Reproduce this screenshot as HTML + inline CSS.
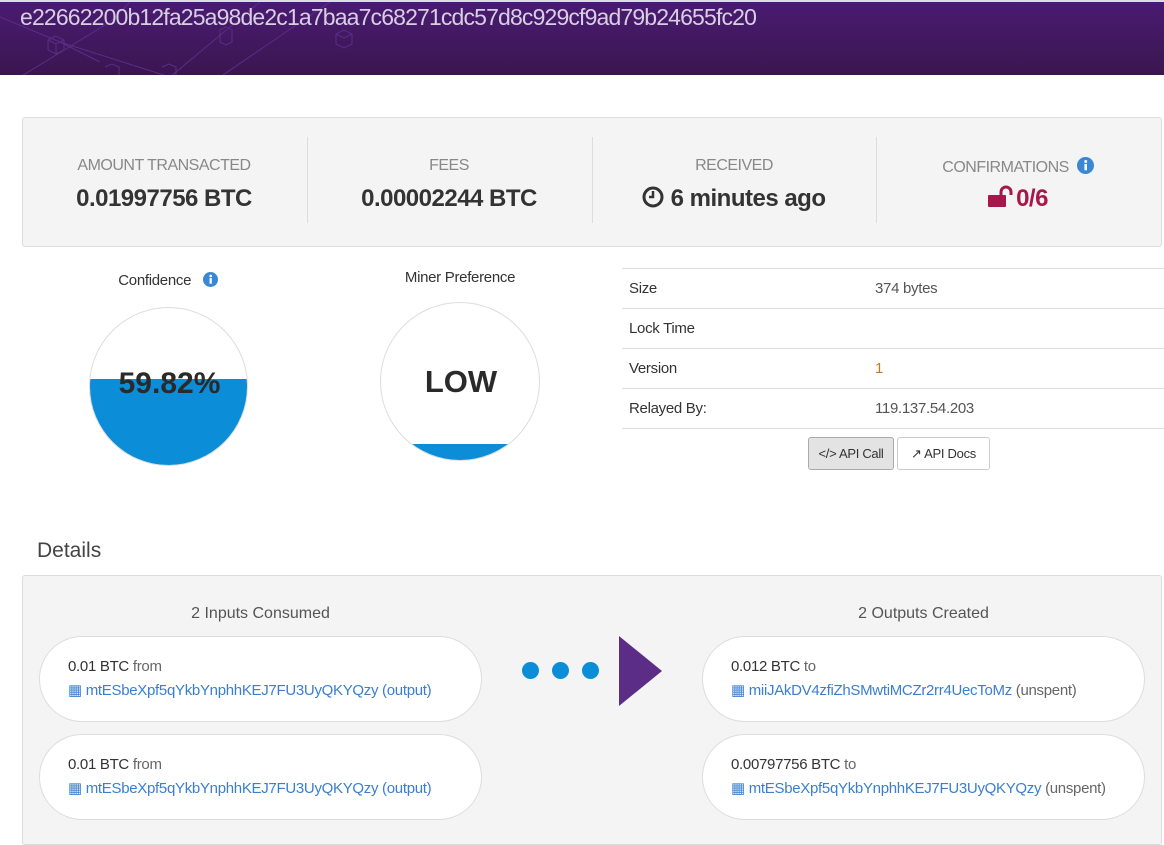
<!DOCTYPE html>
<html><head><meta charset="utf-8"><style>
*{margin:0;padding:0;box-sizing:border-box}
body{width:1164px;height:835px;overflow:hidden;background:#fff;font-family:"Liberation Sans",sans-serif;color:#333;position:relative}
.a{position:absolute}
.hdr{left:0;top:0;width:1164px;height:75px;background:linear-gradient(180deg,#4a1b72,#3a1650);border-top:2px solid #ddd;overflow:hidden}
.hash{left:20px;top:2px;font-size:23px;color:#d8cfe2;letter-spacing:-0.85px}
.stats{left:22px;top:117px;width:1140px;height:130px;background:#f4f4f4;border:1px solid #ddd;border-radius:3px}
.div{top:137px;width:1px;height:86px;background:#ddd}
.lbl{top:157px;width:284px;text-align:center;font-size:16px;color:#888;letter-spacing:-0.5px}
.val{top:185px;width:284px;text-align:center;font-size:24px;font-weight:bold;color:#333;letter-spacing:-0.5px}
.circ{border-radius:50%;border:1px solid #ddd;overflow:hidden;background:#fff}
.row{left:622px;width:542px;height:40px;border-top:1px solid #ddd;font-size:15px;letter-spacing:-0.3px}
.row span{position:absolute;top:11px}
.btn{top:437px;height:33px;border:1px solid #ccc;border-radius:3px;font-size:13px;text-align:center;line-height:31px;color:#333;letter-spacing:-0.3px}
.det{left:22px;top:575px;width:1140px;height:270px;background:#f4f4f4;border:1px solid #ddd;border-radius:3px}
.pill{width:443px;height:86px;background:#fff;border:1px solid #ddd;border-radius:43px;font-size:15px;letter-spacing:-0.3px}
.pill .l1{position:absolute;left:28px;top:21px}
.pill .l2{position:absolute;left:28px;top:44px;color:#3a7fcf}
.pill .g{color:#666}
.dot{width:17px;height:17px;border-radius:50%;background:#0b8dd8;top:662px}
</style></head><body>
<div class="a hdr">
<svg width="800" height="73" style="position:absolute;left:0;top:0" stroke="#5a2d86" fill="none" stroke-width="1">
<path d="M0 15 L60 40 L100 60 M20 75 L110 20 L130 0 M60 40 L170 75 M170 75 L260 0 M330 0 L220 75"/>
<path d="M48 38 l8 -4 l8 4 v10 l-8 4 l-8 -4z M48 38 l8 4 l8 -4 M56 42 v10"/>
<path d="M336 32 l8 -4 l8 4 v10 l-8 4 l-8 -4z M336 32 l8 4 l8 -4"/>
<path d="M220 28 l6 -3 l6 3 v12 l-6 3 l-6 -3z"/>
<path d="M105 65 l7 -3 l7 3 v10 M162 65 l7 -3 l7 3 v10"/>
</svg>
<div class="a hash">e22662200b12fa25a98de2c1a7baa7c68271cdc57d8c929cf9ad79b24655fc20</div>
</div>

<div class="a stats"></div>
<div class="a div" style="left:307px"></div>
<div class="a div" style="left:592px"></div>
<div class="a div" style="left:876px"></div>
<div class="a lbl" style="left:22px">AMOUNT TRANSACTED</div>
<div class="a val" style="left:22px">0.01997756 BTC</div>
<div class="a lbl" style="left:307px">FEES</div>
<div class="a val" style="left:307px">0.00002244 BTC</div>
<div class="a lbl" style="left:592px">RECEIVED</div>
<div class="a val" style="left:592px"><svg width="22" height="22" viewBox="0 0 22 22" style="vertical-align:-2px"><circle cx="11" cy="11" r="9" fill="none" stroke="#333" stroke-width="3"/><path d="M11 5v6h-4" stroke="#333" stroke-width="2.5" fill="none"/></svg> 6 minutes ago</div>
<div class="a lbl" style="left:876px">CONFIRMATIONS &nbsp;<svg width="17" height="17" viewBox="0 0 16 16" style="vertical-align:-2px"><circle cx="8" cy="8" r="8" fill="#3a87d3"/><rect x="7" y="6.5" width="2.4" height="6" fill="#fff"/><circle cx="8.2" cy="4.2" r="1.4" fill="#fff"/></svg></div>
<div class="a val" style="left:876px;color:#a9174a"><svg width="28" height="22" viewBox="0 0 28 22" style="vertical-align:-1px"><rect x="0" y="10" width="18" height="12" rx="1" fill="#a9174a"/><path d="M13 11V7a5 5 0 0 1 10 0v3" stroke="#a9174a" stroke-width="3" fill="none"/></svg>0/6</div>

<div class="a" style="left:89px;top:272px;width:158px;text-align:center;font-size:15px;letter-spacing:-0.3px">Confidence &nbsp;&nbsp;<svg width="15" height="15" viewBox="0 0 16 16" style="vertical-align:-2px"><circle cx="8" cy="8" r="8" fill="#3a87d3"/><rect x="7" y="6.5" width="2.4" height="6" fill="#fff"/><circle cx="8.2" cy="4.2" r="1.4" fill="#fff"/></svg></div>
<div class="a circ" style="left:89px;top:307px;width:159px;height:159px"><div class="a" style="left:0;top:71px;width:159px;height:90px;background:#0b8dd8"></div><div class="a" style="left:0;top:59px;width:159px;text-align:center;font-size:30px;font-weight:bold;color:#2a2a2a">59.82%</div></div>

<div class="a" style="left:380px;top:269px;width:160px;text-align:center;font-size:15px;letter-spacing:-0.3px">Miner Preference</div>
<div class="a circ" style="left:380px;top:302px;width:160px;height:159px"><div class="a" style="left:0;top:141px;width:160px;height:20px;background:#0b8dd8"></div><div class="a" style="left:0;top:61px;width:160px;text-align:center;font-size:31px;font-weight:bold;color:#2a2a2a">LOW</div></div>

<div class="a row" style="top:268px"><span style="left:7px">Size</span><span style="left:253px;color:#555">374 bytes</span></div>
<div class="a row" style="top:308px"><span style="left:7px">Lock Time</span></div>
<div class="a row" style="top:348px"><span style="left:7px">Version</span><span style="left:253px;color:#c07a2a">1</span></div>
<div class="a row" style="top:388px"><span style="left:7px">Relayed By:</span><span style="left:253px;color:#555">119.137.54.203</span></div>
<div class="a row" style="top:428px;height:1px"></div>
<div class="a btn" style="left:808px;width:86px;background:#e3e3e3;border-color:#aaa">&lt;/&gt; API Call</div>
<div class="a btn" style="left:897px;width:93px;background:#fff">&#x2197; API Docs</div>

<div class="a" style="left:37px;top:539px;font-size:21px;color:#444">Details</div>
<div class="a det"></div>
<div class="a" style="left:39px;top:605px;width:443px;text-align:center;font-size:16px;color:#555">2 Inputs Consumed</div>
<div class="a" style="left:702px;top:605px;width:443px;text-align:center;font-size:16px;color:#555">2 Outputs Created</div>

<div class="a pill" style="left:39px;top:636px"><div class="l1">0.01 BTC <span class="g">from</span></div><div class="l2">&#x25A6; mtESbeXpf5qYkbYnphhKEJ7FU3UyQKYQzy (output)</div></div>
<div class="a pill" style="left:39px;top:734px"><div class="l1">0.01 BTC <span class="g">from</span></div><div class="l2">&#x25A6; mtESbeXpf5qYkbYnphhKEJ7FU3UyQKYQzy (output)</div></div>
<div class="a pill" style="left:702px;top:636px"><div class="l1">0.012 BTC <span class="g">to</span></div><div class="l2">&#x25A6; miiJAkDV4zfiZhSMwtiMCZr2rr4UecToMz <span class="g">(unspent)</span></div></div>
<div class="a pill" style="left:702px;top:734px"><div class="l1">0.00797756 BTC <span class="g">to</span></div><div class="l2">&#x25A6; mtESbeXpf5qYkbYnphhKEJ7FU3UyQKYQzy <span class="g">(unspent)</span></div></div>

<div class="a dot" style="left:522px"></div>
<div class="a dot" style="left:552px"></div>
<div class="a dot" style="left:582px"></div>
<svg class="a" style="left:619px;top:636px" width="44" height="70"><polygon points="0,0 43,35 0,70" fill="#5b2d86"/></svg>
</body></html>
